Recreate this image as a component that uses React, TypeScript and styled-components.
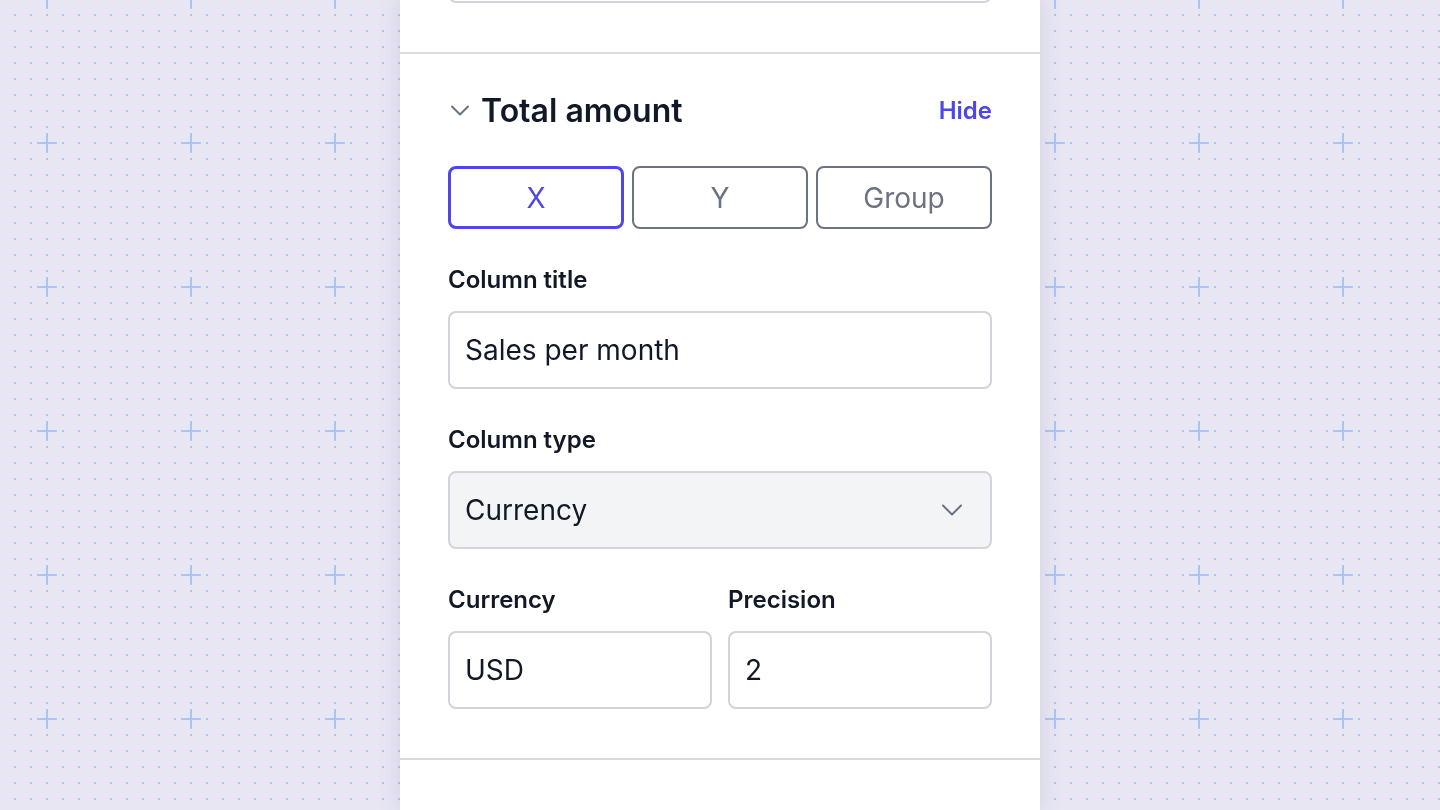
import React from "react";
import styled, { createGlobalStyle } from "styled-components";

const GlobalStyle = createGlobalStyle`
  html, body {
    margin: 0;
    padding: 0;
    height: 100%;
    overflow: hidden;
    background: #e7e6f2;
  }
  * { box-sizing: border-box; }
  body {
    font-family: Inter, "Noto Sans", "Liberation Sans", sans-serif;
    color: #111827;
  }
`;

const Backdrop = styled.svg`
  position: fixed;
  inset: 0;
  width: 100%;
  height: 100%;
  z-index: 0;
  display: block;
`;

const Page = styled.div`
  position: relative;
  z-index: 1;
  display: flex;
  justify-content: center;
  height: 100vh;
  overflow: hidden;
`;

const Panel = styled.div`
  width: 640px;
  min-height: 100vh;
  background: #ffffff;
  box-shadow: 0 0 22px rgba(70, 60, 140, 0.12);
  display: flex;
  flex-direction: column;
`;

const Section = styled.section<{ $divided?: boolean; $offset?: number }>`
  padding: ${(p) => (p.$offset ? 0 : 37)}px 48px 49px;
  margin-top: ${(p) => (p.$offset ? -p.$offset : 0)}px;
  border-top: ${(p) => (p.$divided ? "2px solid #d8dade" : "none")};
  display: flex;
  flex-direction: column;
`;

const Header = styled.div`
  display: flex;
  align-items: center;
  justify-content: space-between;
  height: 40px;
`;

const HeaderLeft = styled.div`
  display: flex;
  align-items: center;
  gap: 10px;
`;

const Title = styled.h2`
  margin: 0;
  font-size: 32px;
  line-height: 40px;
  font-weight: 600;
  color: #111827;
  letter-spacing: 0;
`;

const HideLink = styled.button`
  border: none;
  background: none;
  padding: 0;
  font-family: inherit;
  font-size: 24px;
  line-height: 40px;
  font-weight: 600;
  color: #4f46e5;
  cursor: pointer;
`;

const AxisRow = styled.div`
  display: grid;
  grid-template-columns: repeat(3, 1fr);
  gap: 8px;
  margin-top: 35px;
`;

const AxisButton = styled.button<{ $active?: boolean }>`
  height: 63px;
  border-radius: 8px;
  background: #ffffff;
  font-family: inherit;
  font-size: 28px;
  font-weight: 400;
  color: ${(p) => (p.$active ? "#4f46e5" : "#6b7280")};
  border: ${(p) => (p.$active ? "3px solid #4f46e5" : "2px solid #6b7280")};
  display: flex;
  align-items: center;
  justify-content: center;
  padding: 0;
  cursor: pointer;
`;

const Field = styled.div`
  display: flex;
  flex-direction: column;
  gap: 15px;
  margin-top: 35px;
  min-width: 0;
`;

const Label = styled.label`
  font-size: 24px;
  line-height: 32px;
  font-weight: 600;
  color: #111827;
`;

const TextInput = styled.div`
  height: 78px;
  border: 2px solid #d1d5db;
  border-radius: 8px;
  background: #ffffff;
  padding: 0 15px;
  display: flex;
  align-items: center;
  font-size: 28px;
  color: #111827;
`;

const Select = styled(TextInput)`
  background: #f3f4f6;
  justify-content: space-between;
  padding-right: 26px;
`;

const Pair = styled.div`
  display: grid;
  grid-template-columns: 1fr 1fr;
  gap: 16px;
`;

const Chevron = ({ w, h, d }: { w: number; h: number; d: string }) => (
  <svg width={w} height={h} viewBox={`0 0 ${w} ${h}`} fill="none">
    <path d={d} stroke="#6b7280" strokeWidth={2} strokeLinecap="round" strokeLinejoin="round" />
  </svg>
);

const Background = () => (
  <Backdrop aria-hidden="true">
    <defs>
      <pattern id="dots" x="0" y="0" width="16" height="16" patternUnits="userSpaceOnUse">
        <rect x="14" y="14" width="2" height="2" fill="#a8c6f3" />
      </pattern>
      <pattern id="plus" x="0" y="71" width="144" height="144" patternUnits="userSpaceOnUse">
        <rect x="37" y="71" width="20" height="2" fill="#a8c6f3" />
        <rect x="46" y="62" width="2" height="20" fill="#a8c6f3" />
      </pattern>
    </defs>
    <rect width="100%" height="100%" fill="#e7e6f2" />
    <rect width="100%" height="100%" fill="url(#dots)" />
    <rect width="100%" height="100%" fill="url(#plus)" />
  </Backdrop>
);

export default function App() {
  return (
    <>
      <GlobalStyle />
      <Background />
      <Page>
        <Panel>
          <Section $offset={75}>
            <TextInput />
          </Section>
          <Section $divided>
            <Header>
              <HeaderLeft>
                <Chevron w={23} h={12} d="M4 1.5 L12 9.5 L20 1.5" />
                <Title>Total amount</Title>
              </HeaderLeft>
              <HideLink>Hide</HideLink>
            </Header>
            <AxisRow>
              <AxisButton $active>X</AxisButton>
              <AxisButton>Y</AxisButton>
              <AxisButton>Group</AxisButton>
            </AxisRow>
            <Field>
              <Label>Column title</Label>
              <TextInput>Sales per month</TextInput>
            </Field>
            <Field>
              <Label>Column type</Label>
              <Select>
                <span>Currency</span>
                <Chevron w={24} h={12} d="M3 1.5 L12 10.5 L21 1.5" />
              </Select>
            </Field>
            <Pair>
              <Field>
                <Label>Currency</Label>
                <TextInput>USD</TextInput>
              </Field>
              <Field>
                <Label>Precision</Label>
                <TextInput>2</TextInput>
              </Field>
            </Pair>
          </Section>
          <Section $divided />
        </Panel>
      </Page>
    </>
  );
}
